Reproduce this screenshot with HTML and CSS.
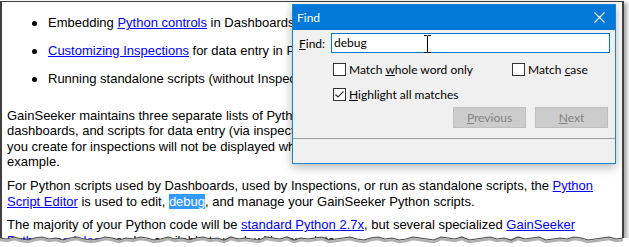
FILE: index.html
```html
<!DOCTYPE html>
<html lang="en">
<head>
  <meta charset="UTF-8">
  <meta name="viewport" content="width=device-width, initial-scale=1.0">
  <title>GainSeeker Python</title>
  <link rel="stylesheet" href="styles.css">
</head>
<body>
  <div class="page">
    <div class="doc">
      <ul class="uses">
        <li>Embedding <a href="#">Python controls</a> in Dashboards</li>
        <li><a href="#">Customizing Inspections</a> for data entry in PC Collect</li>
        <li>Running standalone scripts (without Inspections or Dashboards)</li>
      </ul>
      <p>GainSeeker maintains three separate lists of Python scripts: standalone scripts, scripts for use in
        dashboards, and scripts for data entry (via inspections). For this reason, any custom Python script that
        you create for inspections will not be displayed when you are choosing a script for a dashboard, for
        example.</p>
      <p>For Python scripts used by Dashboards, used by Inspections, or run as standalone scripts, the <a href="#">Python Script Editor</a> is used to edit, <span class="hit">debug</span>, and manage your GainSeeker Python scripts.</p>
      <p>The majority of your Python code will be <a href="#">standard Python 2.7x</a>, but several specialized <a href="#">GainSeeker Python modules</a> are also available to work with your data.</p>
    </div>
    <svg class="torn" width="629" height="17" viewBox="0 0 629 17">
      <path fill="#fff" d="M0,8 L7,9 L14,7 L21,9 L28,10 L35,8 L42,7 L49,9 L56,8 L63,10 L70,8 L77,7 L84,9 L91,10 L98,9 L105,7 L112,8 L119,10 L126,8 L133,9 L140,7 L147,8 L154,10 L161,9 L168,7 L175,9 L182,8 L189,10 L196,8 L203,7 L210,9 L217,8 L224,10 L231,7 L238,9 L245,8 L252,9 L259,10 L266,7 L273,8 L280,9 L287,7 L294,10 L301,8 L308,9 L315,8 L322,7 L329,10 L336,9 L343,8 L350,7 L357,9 L364,10 L371,8 L378,7 L385,9 L392,8 L399,10 L406,9 L413,7 L420,8 L427,9 L434,10 L441,7 L448,8 L455,9 L462,7 L469,10 L476,9 L483,8 L490,7 L497,9 L504,8 L511,10 L518,7 L525,9 L532,8 L539,7 L546,10 L553,9 L560,8 L567,9 L574,7 L581,8 L588,10 L595,9 L602,8 L609,7 L616,9 L623,8 L630,8 L630,17 L0,17 Z"/>
      <polyline class="torn-shadow" points="0,8 7,9 14,7 21,9 28,10 35,8 42,7 49,9 56,8 63,10 70,8 77,7 84,9 91,10 98,9 105,7 112,8 119,10 126,8 133,9 140,7 147,8 154,10 161,9 168,7 175,9 182,8 189,10 196,8 203,7 210,9 217,8 224,10 231,7 238,9 245,8 252,9 259,10 266,7 273,8 280,9 287,7 294,10 301,8 308,9 315,8 322,7 329,10 336,9 343,8 350,7 357,9 364,10 371,8 378,7 385,9 392,8 399,10 406,9 413,7 420,8 427,9 434,10 441,7 448,8 455,9 462,7 469,10 476,9 483,8 490,7 497,9 504,8 511,10 518,7 525,9 532,8 539,7 546,10 553,9 560,8 567,9 574,7 581,8 588,10 595,9 602,8 609,7 616,9 623,8"/>
      <polyline class="torn-edge" points="0,8 7,9 14,7 21,9 28,10 35,8 42,7 49,9 56,8 63,10 70,8 77,7 84,9 91,10 98,9 105,7 112,8 119,10 126,8 133,9 140,7 147,8 154,10 161,9 168,7 175,9 182,8 189,10 196,8 203,7 210,9 217,8 224,10 231,7 238,9 245,8 252,9 259,10 266,7 273,8 280,9 287,7 294,10 301,8 308,9 315,8 322,7 329,10 336,9 343,8 350,7 357,9 364,10 371,8 378,7 385,9 392,8 399,10 406,9 413,7 420,8 427,9 434,10 441,7 448,8 455,9 462,7 469,10 476,9 483,8 490,7 497,9 504,8 511,10 518,7 525,9 532,8 539,7 546,10 553,9 560,8 567,9 574,7 581,8 588,10 595,9 602,8 609,7 616,9 623,8"/>
    </svg>
  </div>

  <div class="find">
    <div class="find-title">
      <span>Find</span>
      <svg class="close" width="11" height="11" viewBox="0 0 11 11">
        <path d="M0.5,0.5 L10.5,10.5 M10.5,0.5 L0.5,10.5" stroke="#fff" stroke-width="1.1"/>
      </svg>
    </div>
    <div class="find-body">
      <div class="find-row">
        <label class="find-label"><u>F</u>ind:</label>
        <div class="find-input">
          debug
          <svg class="ibeam" width="7" height="18" viewBox="0 0 7 18">
            <path d="M0,0.5 H2.5 Q3.5,0.5 3.5,1.5 V16.5 Q3.5,17.5 2.5,17.5 H0 M7,0.5 H4.5 Q3.5,0.5 3.5,1.5 M3.5,16.5 Q3.5,17.5 4.5,17.5 H7" fill="none" stroke="#000" stroke-width="1"/>
          </svg>
        </div>
      </div>
      <div class="opts">
        <label class="opt"><span class="box"></span><span>Match <u>w</u>hole word only</span></label>
        <label class="opt"><span class="box"></span><span>Match <u>c</u>ase</span></label>
        <label class="opt">
          <span class="box">
            <svg width="11" height="11" viewBox="0 0 11 11"><path d="M1.5,5.5 L4,8 L9.5,2.5" fill="none" stroke="#333" stroke-width="1.1"/></svg>
          </span><span><u>H</u>ighlight all matches</span>
        </label>
      </div>
      <div class="btns">
        <button disabled><u>P</u>revious</button>
        <button disabled><u>N</u>ext</button>
      </div>
    </div>
    <div class="find-status"></div>
  </div>
</body>
</html>
```

FILE: styles.css
```css
body {
  margin: 0;
  width: 629px;
  height: 247px;
  overflow: hidden;
  position: relative;
  background: #fff;
  font-family: "Liberation Sans", Arial, sans-serif;
  font-size: 13px;
  color: #000;
}

/* the help page behind the dialog */
.page {
  margin-top: 1px;
  width: 620px;
  height: 244px;
  overflow: hidden;
  border-style: solid;
  border-color: #404040;
  border-width: 1px 2px 0 2px;
  box-shadow: 3px 2px 4px rgba(0, 0, 0, 0.35);
}

.doc {
  padding: 0 10px 0 5px;
  line-height: 1.2;
}

.doc a {
  color: #0000ff;
  text-decoration: underline;
}

.uses {
  margin: 13px 0 21px;
  padding-left: 41px;
  list-style: none;
}

.uses li {
  position: relative;
}

.uses li::before {
  content: "";
  position: absolute;
  left: -16px;
  top: 6px;
  width: 5px;
  height: 5px;
  border-radius: 50%;
  background: #000;
}

.uses li + li {
  margin-top: 12.4px;
}

.doc p {
  margin: 0 0 8px;
}

.hit {
  background: #3399ff;
  color: #fff;
}

.torn {
  position: absolute;
  left: 0;
  top: 230px;
}

.torn-shadow {
  fill: none;
  stroke: #b0b0b0;
  stroke-width: 2.5;
  transform: translateY(2px);
}

.torn-edge {
  fill: none;
  stroke: #4a4a4a;
  stroke-width: 1.2;
}

/* Find dialog */
.find {
  position: absolute;
  left: 292px;
  top: 4px;
  width: 324px;
  height: 160px;
  box-sizing: border-box;
  border: 1px solid #1a84d8;
  background: #f0f0f0;
  box-shadow: 0 3px 10px rgba(0, 0, 0, 0.3);
  font-family: Lato, "Noto Sans", sans-serif;
  font-size: 12px;
  display: flex;
  flex-direction: column;
}

.find-title {
  height: 25px;
  background: #0078d7;
  color: #fff;
  display: flex;
  align-items: center;
  justify-content: space-between;
  padding: 0 10px 0 4px;
}

.find-body {
  height: 105px;
  padding: 3px 5px 0 6px;
}

.find-row {
  display: flex;
  align-items: center;
}

.find-label {
  width: 32px;
}

.find-input {
  position: relative;
  flex: 1;
  height: 20px;
  box-sizing: border-box;
  border: 1px solid #0078d7;
  background: #fff;
  padding-left: 2px;
  line-height: 18px;
}

.ibeam {
  position: absolute;
  left: 92px;
  top: 1px;
}

.opts {
  display: grid;
  grid-template-columns: 179px auto;
  row-gap: 12px;
  margin: 10px 0 0 34px;
}

.opt {
  display: flex;
  align-items: center;
  height: 13px;
}

.box {
  width: 13px;
  height: 13px;
  box-sizing: border-box;
  border: 1px solid #333;
  background: #fff;
  margin-right: 3px;
  display: flex;
}

.btns {
  display: flex;
  justify-content: flex-end;
  gap: 9px;
  margin: 6px 2px 0 0;
}

.btns button {
  width: 73px;
  height: 21px;
  background: #cccccc;
  border: 1px solid #bfbfbf;
  color: #838383;
  font: inherit;
  padding: 0;
}

.find-status {
  flex: 1;
  border-top: 1px solid #a0a0a0;
}
```
